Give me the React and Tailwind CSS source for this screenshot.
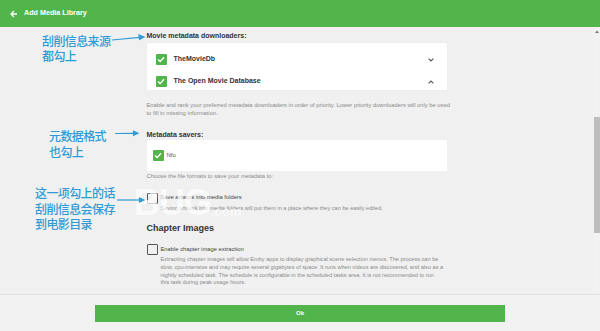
import React from "react";

const sans = { fontFamily: '"Liberation Sans", Arial, sans-serif' };

function Check({ checked }) {
    if (!checked) {
        return <div className="w-[11px] h-[11px] shrink-0 rounded-[1px] border-[1.5px] border-[#555]" />;
    }
    return (
        <div className="w-[11px] h-[11px] shrink-0 rounded-[1px] bg-[#52b54b] flex items-center justify-center">
            <svg width="8" height="7" viewBox="0 0 8 7">
                <path d="M1 3.6 L3.1 5.6 L7 1.2" fill="none" stroke="white" strokeWidth="1.4" />
            </svg>
        </div>
    );
}

function Chevron({ up }) {
    return (
        <svg width="6" height="4" viewBox="0 0 6 4" className="ml-auto mr-[13px]">
            <path d={up ? "M0.6 3.4 L3 1 L5.4 3.4" : "M0.6 0.6 L3 3 L5.4 0.6"} fill="none" stroke="#555" strokeWidth="1.1" />
        </svg>
    );
}

export default function App() {
    return (
        <div className="w-[600px] h-[331px] flex flex-col bg-[#f0f0f0] overflow-hidden relative" style={sans}>
            {/* Header */}
            <div className="h-[27px] bg-[#52b54b] flex items-center pl-[10px] gap-[6px] shrink-0">
                <svg width="8" height="8" viewBox="0 0 8 8">
                    <path d="M7 4 H1.2 M4 1 L1 4 L4 7" fill="none" stroke="white" strokeWidth="1.3" />
                </svg>
                <span className="text-white font-bold text-[7.2px]">Add Media Library</span>
            </div>
            <div className="h-px bg-[#f7eef2] shrink-0" />

            {/* Body */}
            <div className="flex-1 flex min-h-0">
                <div className="flex-1">
                    <div className="w-[300px] mx-auto">
                        <div className="mt-[3px] text-[7px] leading-[9px] font-bold text-[#333]">Movie metadata downloaders:</div>
                        <div className="mt-[3px] h-[47px] bg-white shadow-[0_0_1px_rgba(0,0,0,0.08)] pt-[11px] flex flex-col gap-[11px]">
                            <div className="h-[11px] flex items-center pl-[9px] gap-[7px]">
                                <Check checked />
                                <span className="text-[7px] font-bold text-[#333]">TheMovieDb</span>
                                <Chevron />
                            </div>
                            <div className="h-[11px] flex items-center pl-[9px] gap-[7px]">
                                <Check checked />
                                <span className="text-[7px] font-bold text-[#333]">The Open Movie Database</span>
                                <Chevron up />
                            </div>
                        </div>
                        <p className="mt-[12px] text-[5.8px] leading-[7.6px] text-[#8a8a8a] whitespace-nowrap">
                            Enable and rank your preferred metadata downloaders in order of priority. Lower priority downloaders will only be used
                            <br />
                            to fill in missing information.
                        </p>

                        <div className="mt-[13px] text-[7px] leading-[9px] font-bold text-[#333]">Metadata savers:</div>
                        <div className="mt-[1px] h-[31px] bg-white flex items-center pl-[6px] gap-[3px]">
                            <Check checked />
                            <span className="text-[6px] text-[#555]">Nfo</span>
                        </div>
                        <p className="mt-[2px] text-[5.8px] leading-[7.6px] text-[#8a8a8a]">Choose the file formats to save your metadata to:</p>

                        <div className="mt-[12px] flex gap-[3px]">
                            <Check />
                            <div>
                                <div className="text-[5.8px] leading-[8px] text-[#444]">Save artwork into media folders</div>
                                <div className="mt-[4px] text-[5.6px] leading-[7.6px] text-[#8a8a8a]">Saving artwork into media folders will put them in a place where they can be easily edited.</div>
                            </div>
                        </div>

                        <div className="mt-[11px] text-[9px] leading-[11px] font-bold text-[#333]">Chapter Images</div>

                        <div className="mt-[10px] flex gap-[3px]">
                            <Check />
                            <div>
                                <div className="text-[5.8px] leading-[11px] text-[#444]">Enable chapter image extraction</div>
                                <p className="mt-[1px] text-[5.6px] leading-[7.7px] text-[#8a8a8a] whitespace-nowrap">
                                    Extracting chapter images will allow Emby apps to display graphical scene selection menus. The process can be
                                    <br />
                                    slow, cpu-intensive and may require several gigabytes of space. It runs when videos are discovered, and also as a
                                    <br />
                                    nightly scheduled task. The schedule is configurable in the scheduled tasks area. It is not recommended to run
                                    <br />
                                    this task during peak usage hours.
                                </p>
                            </div>
                        </div>
                    </div>
                </div>

                {/* Scrollbar */}
                <div className="w-[7px] flex flex-col items-center bg-[#f2f2f2]">
                    <svg width="4" height="3" viewBox="0 0 4 3" className="mt-[2px]">
                        <path d="M0 3 L2 0.5 L4 3 Z" fill="#777" />
                    </svg>
                    <div className="mt-[84px] w-[6px] h-[116px] bg-[#bdbdbd]" />
                </div>
            </div>

            {/* Footer */}
            <div className="h-[37px] shrink-0 border-t border-[#e2e2e2] bg-[#f2f2f2] flex justify-center pt-[10px]">
                <div className="w-[410px] h-[17px] bg-[#52b54b] flex items-center justify-center text-white font-bold text-[6px]">Ok</div>
            </div>

            {/* Watermark */}
            <div className="absolute left-[134px] top-[184px] flex items-end text-white opacity-70 pointer-events-none">
                <span className="text-[36px] leading-[38px] font-bold tracking-[-1px]">BUG</span>
                <span className="text-[13px] leading-[20px] font-bold">.com</span>
            </div>

            {/* Annotations */}
            <div className="absolute inset-0 pointer-events-none text-[#2f9bd6] text-[12px] font-medium tracking-[-0.6px]" style={{ fontFamily: '"Noto Sans CJK SC", sans-serif' }}>
                <div className="absolute left-[42px] top-[33px] leading-[15px]">刮削信息来源<br />都勾上</div>
                <div className="absolute left-[49px] top-[128px] leading-[16px]">元数据格式<br />也勾上</div>
                <div className="absolute left-[35px] top-[185px] leading-[15.5px]">这一项勾上的话<br />刮削信息会保存<br />到电影目录</div>
                <svg className="absolute left-0 top-0" width="600" height="331">
                    <g stroke="#2f9bd6" strokeWidth="1.2" fill="#2f9bd6">
                        <line x1="112" y1="40" x2="140" y2="37.3" />
                        <path d="M144 37 L139 35 L139.6 39.4 Z" />
                        <line x1="115" y1="133.5" x2="134" y2="133.3" />
                        <path d="M138 133.3 L133.5 131.2 L133.5 135.4 Z" />
                        <line x1="117" y1="200" x2="140" y2="200" />
                        <path d="M144 200 L139.5 197.9 L139.5 202.1 Z" />
                    </g>
                </svg>
            </div>
        </div>
    );
}
